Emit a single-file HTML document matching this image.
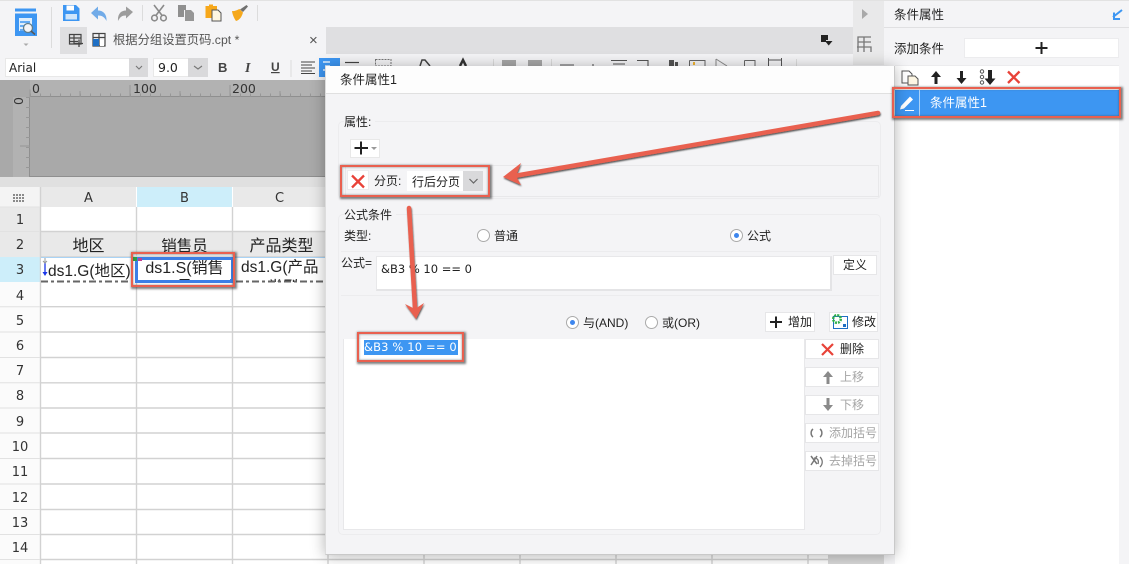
<!DOCTYPE html>
<html lang="zh"><head><meta charset="utf-8"><title>条件属性</title>
<style>
html,body{margin:0;padding:0;width:1129px;height:564px;overflow:hidden;background:#fff}
body{position:relative;font-family:"Liberation Sans","Noto Sans CJK SC",sans-serif;color:#222}
div,span{position:absolute;box-sizing:border-box;white-space:nowrap}
.t{font-size:12px;line-height:16px}
.d{font-family:"DejaVu Sans","Noto Sans CJK SC",sans-serif}
.btn{background:#fff;border:1px solid #e6e6e8;height:20px;font-size:12px;line-height:18px}
.dis{color:#a5a5a5}
.rn{left:0;width:40px;text-align:center;font-size:13px;line-height:16px;color:#333;font-family:"DejaVu Sans",sans-serif}
.ch{top:191px;text-align:center;font-size:13px;line-height:16px;color:#333;font-family:"DejaVu Sans",sans-serif}
.red{border:2px solid #e9604f;box-shadow:1px 1px 2px 1px rgba(60,60,60,.65), inset 0 0 2px rgba(60,60,60,.6)}
svg{position:absolute;left:0;top:0}
</style></head><body>

<!-- toolbar -->
<div style="left:0;top:0;width:1129px;height:80px;background:#f4f4f6;border-top:1px solid #e2e2e2"></div>
<div style="left:60px;top:27px;width:793px;height:27px;background:#dfdfe1"></div>
<div style="left:87px;top:27px;width:239px;height:27px;background:#f4f4f6"></div>
<div style="left:853px;top:1px;width:31px;height:64px;background:#e9e9ea"></div>
<div class="t" style="left:113px;top:32px;color:#555;font-size:12.300px">根据分组设置页码.cpt *</div>
<div style="left:309px;top:31px;font-size:15px;line-height:20px;color:#555">×</div>

<div style="left:5px;top:58px;width:143px;height:19px;background:#fff;border:1px solid #e8e8e8"></div>
<div style="left:129px;top:58px;width:19px;height:19px;background:#d9d9db"></div>
<div class="d" style="left:9px;top:60px;font-size:12px;line-height:16px">Arial</div>
<div style="left:153px;top:58px;width:55px;height:19px;background:#fff;border:1px solid #e8e8e8"></div>
<div style="left:188px;top:58px;width:20px;height:19px;background:#d9d9db"></div>
<div class="d" style="left:158px;top:60px;font-size:12.500px;line-height:16px">9.0</div>
<div style="left:319px;top:58px;width:21px;height:19px;background:#3d96f2"></div>

<!-- dark design area -->
<div style="left:0;top:80px;width:326px;height:97px;background:#a9a9a9"></div>
<div style="left:30px;top:80px;width:296px;height:17px;background:#b2b2b2;border-bottom:1px solid #8f8f8f"></div>
<div style="left:13px;top:97px;width:17px;height:80px;background:#b2b2b2;border-right:1px solid #8f8f8f"></div>
<div style="left:30px;top:176px;width:296px;height:1px;background:#8f8f8f"></div>
<div class="d" style="left:32px;top:81px;font-size:12.500px;line-height:16px;color:#333">0</div>
<div class="d" style="left:133px;top:81px;font-size:12.500px;line-height:16px;color:#333">100</div>
<div class="d" style="left:232px;top:81px;font-size:12.500px;line-height:16px;color:#333">200</div>
<div class="d" style="left:11px;top:93px;width:16px;text-align:center;font-size:12.500px;line-height:16px;color:#333;transform:rotate(-90deg)">0</div>
<svg width="330" height="180">
<path d="M30 95H326" stroke="#979797" stroke-width="3" stroke-dasharray="1 9"/>
<path d="M30 89.500V97M80 91V97M130 85V97M180 91V97M230 85V97M280 91V97" stroke="#979797"/>
<path d="M28 97V177" stroke="#979797" stroke-width="4" stroke-dasharray="1 9"/>
<path d="M20 146H30" stroke="#979797"/>
</svg>
<div style="left:0;top:177px;width:326px;height:10px;background:#e0e0e0"></div>

<!-- grid -->
<div style="left:0;top:187px;width:40px;height:377px;background:#fbfbfb"></div>
<div style="left:0;top:187px;width:40px;height:20px;background:#f4f4f4"></div>
<div style="left:0;top:207px;width:40px;height:50px;background:#e9e9e9"></div>
<div style="left:0;top:257px;width:40px;height:25px;background:#cdeefa"></div>
<div style="left:41px;top:187px;width:95px;height:20px;background:#e9e9e9"></div>
<div style="left:137px;top:187px;width:95px;height:20px;background:#cdeefa"></div>
<div style="left:233px;top:187px;width:93px;height:20px;background:#e9e9e9"></div>
<div style="left:41px;top:232px;width:285px;height:25px;background:#e9e9e9"></div>
<div class="ch" style="left:41px;width:95px">A</div>
<div class="ch" style="left:137px;width:95px">B</div>
<div class="ch" style="left:233px;width:93px">C</div>
<div class="rn" style="top:213px">1</div><div class="rn" style="top:238px">2</div><div class="rn" style="top:263px">3</div>
<div class="rn" style="top:289px">4</div><div class="rn" style="top:314px">5</div><div class="rn" style="top:339px">6</div>
<div class="rn" style="top:364px">7</div><div class="rn" style="top:389px">8</div><div class="rn" style="top:415px">9</div>
<div class="rn" style="top:440px">10</div><div class="rn" style="top:465px">11</div><div class="rn" style="top:491px">12</div>
<div class="rn" style="top:516px">13</div><div class="rn" style="top:541px">14</div>
<svg width="1129" height="564" style="pointer-events:none">
<g stroke="#d2d2d2" stroke-width="1.400" fill="none">
<path d="M40.500 187V564M136.500 207V564M232.500 207V564M328 555V564M424 555V564M520 555V564M616 555V564M712 555V564M808 555V564"/>
<path d="M41 231.500H326M41 257H326M41 306.700H326M41 332H326M41 357.500H326M41 382.800H326M41 408H326M41 433H326M41 458.500H326M41 484H326M41 509.500H326M41 534.500H326M41 559.500H828"/>
</g>
<path d="M0 207H40M0 231.500H40M0 306.700H40M0 332H40M0 357.500H40M0 382.800H40M0 408H40M0 433H40M0 458.500H40M0 484H40M0 509.500H40M0 534.500H40M0 559.500H40" stroke="#e2e2e2"/>
<g fill="#8a8a8a"><rect x="13" y="194" width="2" height="2"/><rect x="16" y="194" width="2" height="2"/><rect x="19" y="194" width="2" height="2"/><rect x="22" y="194" width="2" height="2"/><rect x="13" y="197" width="2" height="2"/><rect x="16" y="197" width="2" height="2"/><rect x="19" y="197" width="2" height="2"/><rect x="22" y="197" width="2" height="2"/><rect x="13" y="200" width="2" height="2"/><rect x="16" y="200" width="2" height="2"/><rect x="19" y="200" width="2" height="2"/><rect x="22" y="200" width="2" height="2"/></g>
</svg>
<div style="left:828px;top:555px;width:56px;height:9px;background:#d8d8d8"></div>

<div style="left:41px;top:237px;width:95px;text-align:center;font-size:16px;line-height:20px;color:#222">地区</div>
<div style="left:137px;top:237px;width:95px;text-align:center;font-size:15.500px;line-height:20px;color:#222">销售员</div>
<div style="left:235px;top:237px;width:93px;text-align:center;font-size:16px;line-height:20px;color:#222">产品类型</div>
<div style="left:41px;top:257px;width:285px;height:25px;background:#fff"></div>
<div style="left:41px;top:257px;width:285px;height:1px;background:#a9d3f5"></div>
<div style="left:48px;top:262px;font-size:15.500px;line-height:20px">ds1.G(地区)</div>
<div style="left:241px;top:258px;width:84px;height:24px;overflow:hidden;font-size:15.500px;line-height:20px"><span style="position:static;display:block">ds1.G(产品</span><span style="position:static;display:block;text-align:center">类型</span></div>
<svg width="1129" height="564"><path d="M41 281.500H132M236 281.500H326" stroke="#666" stroke-width="2" stroke-dasharray="7 3 3 3"/><path d="M45 263V274" stroke="#1a35e8" stroke-width="1.300"/><path d="M42.500 272L45 276 47.500 272Z" fill="#1a35e8"/><path d="M45 258V263M43 261L45 263 47 261" stroke="#999" fill="none"/></svg>
<div style="left:135px;top:257px;width:99px;height:26px;background:#fff;border:3px solid #3c7fe6;overflow:hidden;text-align:center;font-size:16px;line-height:19px"><span style="position:static;display:block;margin-top:-1px">ds1.S(销售</span><span style="position:static;display:block">员</span></div>
<div style="left:230px;top:279px;width:4px;height:4px;background:#3c7fe6"></div>
<div style="left:132px;top:257px;width:5px;height:4px;background:#2ea043"></div>
<div style="left:138px;top:258px;width:4px;height:3px;background:#c2408f"></div>

<!-- toolbar icons -->
<svg width="330" height="80">
<path d="M15 8.500H36V11.500H15Z" fill="#3d96f2"/>
<path d="M15 13.500H37V36H15Z" fill="#3d96f2"/>
<path d="M19 18H32V31H19Z" fill="#dfeefc"/>
<path d="M20 22H30M20 26H24M20 30H24" stroke="#3d96f2" stroke-width="1.500"/>
<circle cx="28" cy="28" r="4.500" fill="#f4f4f6" stroke="#607d8b" stroke-width="1.300"/><path d="M31 31L35 34.500" stroke="#555" stroke-width="1.500"/>
<path d="M23.500 43.500H28.500L26 46Z" fill="#aaa"/>
<path d="M51.500 7V48" stroke="#dcdcdc"/>
<path d="M63 5H76L79.500 8.500V21H63Z" fill="#3d96f2"/><path d="M66.500 5.500H74V10.500H66.500Z" fill="#fff"/><path d="M65.500 14H77V19.500H65.500Z" fill="#cfe5fb"/>
<path d="M91 13L98 6.500V10.500C103 10.500 107 14 106.500 21C104.500 17 102 15.500 98 15.500V19.500Z" fill="#71abe8"/>
<path d="M133 12L126 6.500V10.500C121 10.500 117.500 14 118 21C120 17 122 15.500 126 15.500V18.500Z" fill="#9c9c9c"/>
<path d="M142.500 5V21" stroke="#dcdcdc"/>
<g stroke="#8a8a8a" fill="none" stroke-width="1.600"><path d="M154 5L162.500 16M164 5L155.500 16"/><circle cx="154.500" cy="18" r="2.800"/><circle cx="163.500" cy="18" r="2.800"/></g>
<path d="M178 5H186V10H184V17H178Z" fill="#8f8f8f"/><path d="M185 10H191L194 13V21H185Z" fill="#969696"/>
<path d="M205.500 6H209V4.500H213V6H217V10H212V18H205.500Z" fill="#f7a81b"/><path d="M212 10H218L221 13V21H212Z" fill="#fdf6e3" stroke="#555"/>
<path d="M246.500 5L248 6.500L243 12L240 9.500Z" fill="#707070"/><path d="M232 11C235 11.500 238 9.500 239.500 9L243 12.500C242 16 240 20 236 21C234.500 19 232.500 15 232 11Z" fill="#f5a81c"/>
<path d="M257.500 5V21" stroke="#dcdcdc"/>
<path d="M69.500 34.500H81V44H69.500ZM69.500 38H81M69.500 41.500H78M74 34.500V44" stroke="#444" fill="none" stroke-width="1.200"/>
<path d="M74.500 43.500H83M79 39.500V47" stroke="#444" stroke-width="1.300"/>
<path d="M93 33.500H105V46H93ZM93 37.500H105M99 33.500V46" stroke="#444" fill="none" stroke-width="1.200"/><path d="M93 39H99V46H93Z" fill="#1f6fc4"/><path d="M100 40H104V46H100Z" fill="#fff"/>
<path d="M136 66L139 69 142 66" stroke="#777" fill="none" stroke-width="1.100"/>
<path d="M194 66L198 69 202 66" stroke="#777" fill="none" stroke-width="1.100"/>
<text x="218" y="72" font-family="Liberation Sans" font-weight="700" font-size="13" fill="#444">B</text>
<text x="245" y="72" font-family="Liberation Serif" font-style="italic" font-weight="700" font-size="14" fill="#444">I</text>
<text x="271" y="71" font-family="Liberation Sans" font-weight="700" font-size="12" fill="#444" text-decoration="underline">U</text>
<path d="M291 60V77" stroke="#dcdcdc"/>
<path d="M301 62H315M301 65H312M301 68H315M301 71H312M301 73.500H315" stroke="#444" stroke-width="1.100"/>
<path d="M323 62H335M325 66H333M323 70H335" stroke="#fff" stroke-width="1.200"/>
</svg>
<svg width="885" height="80">
<path d="M345 62.500H359" stroke="#444" stroke-width="1.200"/>
<path d="M375.500 59.500H391V66H375.500Z" stroke="#777" stroke-dasharray="2 1" fill="none"/>
<path d="M420 66L422 60H425L430 66" stroke="#444" stroke-width="1.500" fill="none"/>
<path d="M460 66L463 60 466 66" stroke="#333" stroke-width="2.500" fill="none"/>
<path d="M493.500 59V66M551.500 59V66M796.500 59V66" stroke="#dcdcdc"/>
<path d="M502 60H516V66H502ZM528 60H542V66H528Z" fill="#a8a8a8"/>
<path d="M560 65H574M593 64V66M611 60.500H627M613 64H625M637 60.500H648V66" stroke="#555" stroke-width="1.100" fill="none"/>
<path d="M669 60H674V66H669ZM675 62H678V66H675Z" fill="#555"/>
<path d="M689.500 60.500H705V66M689.500 60.500V66M744.500 60.500H755V66M744.500 60.500V66" stroke="#666" fill="none"/><rect x="693" y="62" width="2" height="3" fill="#f2b431"/>
<path d="M716 59L727 66M716 59V66" stroke="#888" fill="none"/>
<path d="M768 60H782M768.500 58V66M781.500 58V66" stroke="#555" fill="none"/>
<path d="M821 35H828V40H826V42H821Z" fill="#222"/><path d="M825 41H832.500L828.700 45.500Z" fill="#222"/>
<path d="M862 9V19L868 14Z" fill="#a9a9a9"/>
<path d="M871 37H858V52M864 37V52M871 52V47H857M871 42H858" stroke="#777" fill="none" stroke-width="1.300"/>
</svg>

<!-- right panel -->
<div style="left:884px;top:1px;width:245px;height:563px;background:#f4f4f6"></div>
<div style="left:884px;top:27px;width:245px;height:1px;background:#e0e0e2"></div>
<div class="t" style="left:894px;top:7px;font-size:12.500px">条件属性</div>
<div class="t" style="left:894px;top:41px;font-size:12.500px">添加条件</div>
<div style="left:964px;top:38px;width:155px;height:20px;background:#fff;border:1px solid #ececee"></div>
<div style="left:895px;top:65px;width:224px;height:499px;background:#fff;border-top:1px solid #ececee"></div>
<div style="left:895px;top:90px;width:224px;height:26px;background:#3d96f2"></div>
<div style="left:919px;top:90px;width:1px;height:26px;background:#a8d2fa"></div>
<div class="t" style="left:930px;top:95px;font-size:12.500px;color:#fff">条件属性1</div>
<svg width="1129" height="130">
<path d="M1113 17L1122 10M1114 12.500V19H1120" stroke="#3d96f2" stroke-width="2" fill="none"/>
<path d="M1041.500 42V54M1035.500 48H1047.500" stroke="#222" stroke-width="2"/>
<path d="M902 71H909L912 74V83H902Z" fill="#fff" stroke="#555"/><path d="M908 76H915L918 79V85H908Z" fill="#fdf6e3" stroke="#555"/>
<path d="M936 71L931 77H934.500V84H937.500V77H941Z" fill="#222"/>
<path d="M961.500 84L966.500 78H963V71H960V78H956.500Z" fill="#222"/>
<circle cx="982" cy="71.500" r="1.700" fill="none" stroke="#555"/><circle cx="982" cy="77" r="1.700" fill="none" stroke="#555"/><circle cx="982" cy="82.500" r="1.700" fill="none" stroke="#555"/>
<path d="M990 85L995.500 78.500H992V70H988V78.500H984.500Z" fill="#222"/>
<path d="M1008 71.500L1019.500 83M1019.500 71.500L1008 83" stroke="#e84238" stroke-width="2.300"/>
<path d="M901 106L910 96.500 913 99.500 904 108.500 900 109.500Z" fill="#fff"/><path d="M905 110.500H914" stroke="#fff"/>
</svg>

<!-- dialog -->
<div style="left:325px;top:66px;width:570px;height:489px;background:#f4f4f6;box-shadow:0 1px 14px rgba(0,0,0,.3);border-right:1px solid #c9c9c9;border-bottom:1px solid #c9c9c9;border-left:1px solid #ddd"></div>
<div style="left:326px;top:66px;width:568px;height:28px;background:#fdfdfd;border-bottom:1px solid #e0e0e0"></div>
<div class="t" style="left:340px;top:72px;font-size:12.500px">条件属性1</div>

<div style="left:338px;top:121px;width:543px;height:78px;border:1px solid #ececee;border-radius:5px"></div>
<div class="t" style="left:344px;top:114px;background:#f4f4f6;padding-right:4px">属性:</div>
<div style="left:350px;top:139px;width:30px;height:19px;background:#fff;border:1px solid #e8e8e8"></div>
<div style="left:345px;top:165px;width:534px;height:32px;border:1px solid #e8e8ea"></div>
<div style="left:347px;top:170px;width:22px;height:20px;background:#fff;border:1px solid #ececee"></div>
<div class="t" style="left:374px;top:173px">分页:</div>
<div style="left:407px;top:171px;width:76px;height:20px;background:#fff"></div>
<div style="left:463px;top:171px;width:20px;height:20px;background:#d9d9db"></div>
<div class="t" style="left:412px;top:174px">行后分页</div>

<div style="left:338px;top:214px;width:543px;height:321px;border:1px solid #ececee;border-radius:5px"></div>
<div class="t" style="left:344px;top:207px;background:#f4f4f6;padding-right:4px">公式条件</div>
<div class="t" style="left:344px;top:228px">类型:</div>
<div style="left:477px;top:229px;width:13px;height:13px;border-radius:50%;background:#fff;border:1px solid #aaa"></div>
<div class="t" style="left:494px;top:228px">普通</div>
<div style="left:730px;top:229px;width:13px;height:13px;border-radius:50%;background:#fff;border:1px solid #aaa"></div>
<div style="left:734px;top:233px;width:5px;height:5px;border-radius:50%;background:#3d86ee"></div>
<div class="t" style="left:747px;top:228px">公式</div>
<div style="left:341px;top:251px;width:538px;height:1px;background:#ececee"></div>
<div class="t" style="left:341px;top:255px">公式=</div>
<div style="left:376px;top:256px;width:456px;height:35px;background:#fff;border-right:2px solid #e4e4e6;border-bottom:2px solid #e4e4e6;border-left:1px solid #e8e8ea;border-top:1px solid #e8e8ea"></div>
<div class="t d" style="left:381px;top:261px;font-size:11.500px">&amp;B3 % 10 == 0</div>
<div class="btn" style="left:833px;top:255px;width:44px;text-align:center">定义</div>
<div style="left:341px;top:295px;width:538px;height:1px;background:#ececee"></div>

<div style="left:566px;top:316px;width:13px;height:13px;border-radius:50%;background:#fff;border:1px solid #aaa"></div>
<div style="left:570px;top:320px;width:5px;height:5px;border-radius:50%;background:#3d86ee"></div>
<div class="t" style="left:583px;top:315px">与(AND)</div>
<div style="left:645px;top:316px;width:13px;height:13px;border-radius:50%;background:#fff;border:1px solid #aaa"></div>
<div class="t" style="left:662px;top:315px">或(OR)</div>
<div class="btn" style="left:765px;top:312px;width:50px;padding-left:22px">增加</div>
<div class="btn" style="left:829px;top:312px;width:49px;padding-left:22px">修改</div>

<div style="left:343px;top:339px;width:462px;height:191px;background:#fff;border:1px solid #e8e8ea;border-top:0"></div>
<div class="btn" style="left:805px;top:339px;width:74px;padding-left:34px">删除</div>
<div class="btn dis" style="left:805px;top:367px;width:74px;padding-left:34px">上移</div>
<div class="btn dis" style="left:805px;top:395px;width:74px;padding-left:34px">下移</div>
<div class="btn dis" style="left:805px;top:423px;width:74px;padding-left:23px">添加括号</div>
<div class="btn dis" style="left:805px;top:451px;width:74px;padding-left:23px">去掉括号</div>

<div class="t d" style="left:364px;top:340px;width:94px;height:15px;line-height:15px;background:#3d96f2;color:#fff;font-size:11.500px;letter-spacing:.15px">&amp;B3 % 10 == 0</div>

<svg width="1129" height="564">
<path d="M361 141.500V154.500M354.500 148H368" stroke="#222" stroke-width="2"/>
<path d="M371 147H377L374 150Z" fill="#999"/>
<path d="M352 175.500L364 187.500M364 175.500L352 187.500" stroke="#e84238" stroke-width="2.300"/>
<path d="M469.500 179L473.500 183 477.500 179" stroke="#666" fill="none" stroke-width="1.200"/>
<path d="M770 322H782M776 316.500V328" stroke="#222" stroke-width="2"/>
<rect x="833.500" y="316.500" width="14" height="12" fill="#fff" stroke="#1f6fc4"/>
<circle cx="837" cy="319" r="3.800" fill="none" stroke="#30b04a" stroke-width="2.500" stroke-dasharray="2 1"/>
<rect x="843" y="324" width="3" height="3" fill="#1f6fc4"/>
<path d="M822 344L833 355M833 344L822 355" stroke="#e84238" stroke-width="2.200"/>
<path d="M828 371L823 377H826.500V384H829.500V377H833Z" fill="#8a8a8a"/>
<path d="M828 411L833 405H829.500V398H826.500V405H823Z" fill="#8a8a8a"/>
<path d="M813 429C810.500 431 810.500 435 813 437M820 429C822.500 431 822.500 435 820 437" stroke="#777" fill="none" stroke-width="1.500"/>
<path d="M811 456L817 464M817 456L811 465" stroke="#777" fill="none" stroke-width="1.500"/>
<path d="M814 458C818 458 819 461 818 464" stroke="#777" fill="none" stroke-width="1.300"/>
<path d="M820 457C823 460 823 464 820 467" stroke="#777" fill="none" stroke-width="1.300"/>
</svg>

<!-- annotation boxes -->
<div class="red" style="left:131px;top:252px;width:104px;height:35px"></div>
<div class="red" style="left:340px;top:165px;width:150px;height:32px"></div>
<div class="red" style="left:357px;top:332px;width:107px;height:30px"></div>
<div class="red" style="left:892px;top:87px;width:229px;height:31px"></div>

<!-- arrows -->
<svg width="1129" height="564">
<defs><filter id="s" x="-10%" y="-10%" width="120%" height="120%"><feDropShadow dx="0.600" dy="1.400" stdDeviation="0.800" flood-color="#222" flood-opacity=".75"/></filter></defs>
<g filter="url(#s)">
<path d="M878 113L514 176" stroke="#e9604f" stroke-width="4.500" stroke-linecap="round" fill="none"/>
<path d="M503 177L521 163 516 176 521 185Z" fill="#e9604f"/>
<path d="M409 208L415 308" stroke="#e9604f" stroke-width="4.500" stroke-linecap="round" fill="none"/>
<path d="M416 319L405 304 415 309 424 303Z" fill="#e9604f"/>
</g>
</svg>
</body></html>
